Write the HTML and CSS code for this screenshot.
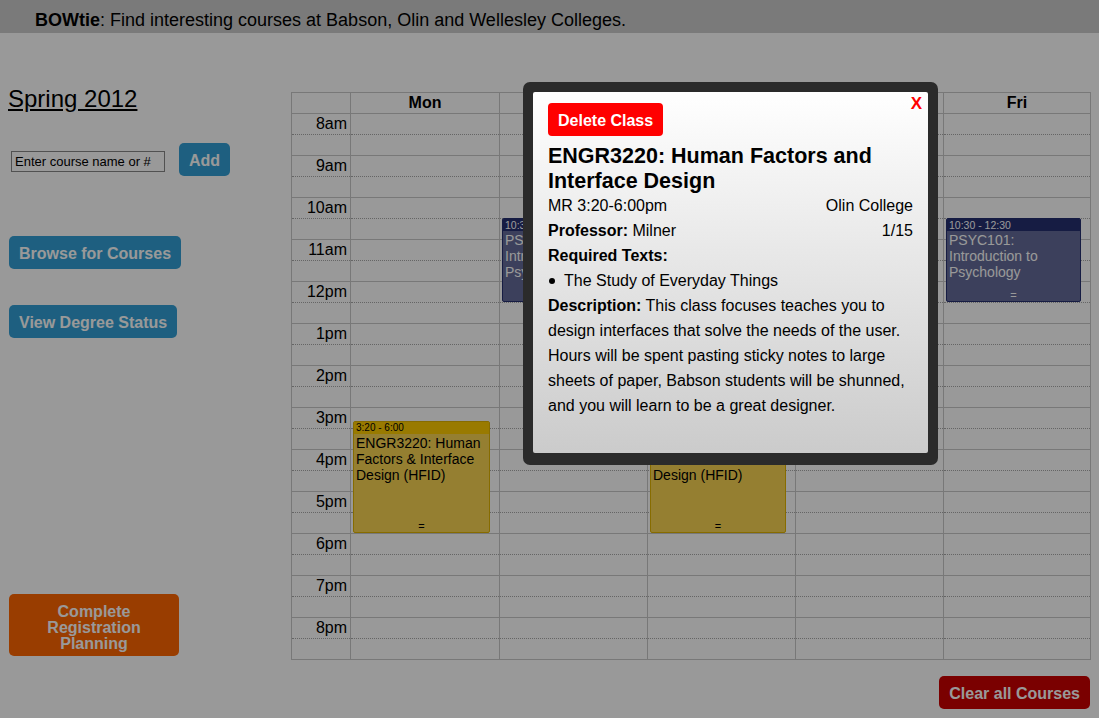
FILE: index.html
```html
<!DOCTYPE html>
<html>
<head>
<meta charset="utf-8">
<title>BOWtie</title>
<link rel="stylesheet" href="styles.css">
</head>
<body>
<div class="topbar"><b>BOWtie</b>: Find interesting courses at Babson, Olin and Wellesley Colleges.</div>
<div class="main">
  <div class="sidebar">
    <a class="term" href="#">Spring 2012</a>
    <div class="addrow">
      <input class="course-input" type="text" value="Enter course name or #">
      <button class="btn btn-add">Add</button>
    </div>
    <button class="btn btn-browse">Browse for Courses</button>
    <button class="btn btn-degree">View Degree Status</button>
    <button class="btn btn-complete">Complete<br>Registration<br>Planning</button>
  </div>
  <div class="calendar-area">
    <div class="cal">
      <div class="col col-time">
        <div class="head"></div>
        <div class="hr"><div class="half">8am</div></div>
        <div class="hr"><div class="half">9am</div></div>
        <div class="hr"><div class="half">10am</div></div>
        <div class="hr"><div class="half">11am</div></div>
        <div class="hr"><div class="half">12pm</div></div>
        <div class="hr"><div class="half">1pm</div></div>
        <div class="hr"><div class="half">2pm</div></div>
        <div class="hr"><div class="half">3pm</div></div>
        <div class="hr"><div class="half">4pm</div></div>
        <div class="hr"><div class="half">5pm</div></div>
        <div class="hr"><div class="half">6pm</div></div>
        <div class="hr"><div class="half">7pm</div></div>
        <div class="hr"><div class="half">8pm</div></div>
      </div>
      <div class="col col-mon">
        <div class="head">Mon</div>
        <div class="hr"><div class="half"></div></div><div class="hr"><div class="half"></div></div><div class="hr"><div class="half"></div></div><div class="hr"><div class="half"></div></div><div class="hr"><div class="half"></div></div><div class="hr"><div class="half"></div></div><div class="hr"><div class="half"></div></div><div class="hr"><div class="half"></div></div><div class="hr"><div class="half"></div></div><div class="hr"><div class="half"></div></div><div class="hr"><div class="half"></div></div><div class="hr"><div class="half"></div></div><div class="hr"><div class="half"></div></div>
        <div class="event yellow" style="top:328px;height:112px">
          <div class="event-time">3:20 - 6:00</div>
          <div class="event-body">ENGR3220: Human Factors &amp; Interface Design (HFID)</div>
          <div class="grip">=</div>
        </div>
      </div>
      <div class="col col-mid">
        <div class="head">Tue</div>
        <div class="hr"><div class="half"></div></div><div class="hr"><div class="half"></div></div><div class="hr"><div class="half"></div></div><div class="hr"><div class="half"></div></div><div class="hr"><div class="half"></div></div><div class="hr"><div class="half"></div></div><div class="hr"><div class="half"></div></div><div class="hr"><div class="half"></div></div><div class="hr"><div class="half"></div></div><div class="hr"><div class="half"></div></div><div class="hr"><div class="half"></div></div><div class="hr"><div class="half"></div></div><div class="hr"><div class="half"></div></div>
        <div class="event blue" style="top:125px;height:84px">
          <div class="event-time">10:30 - 12:30</div>
          <div class="event-body">PSYC101: Introduction to Psychology</div>
          <div class="grip">=</div>
        </div>
      </div>
      <div class="col col-mid">
        <div class="head">Wed</div>
        <div class="hr"><div class="half"></div></div><div class="hr"><div class="half"></div></div><div class="hr"><div class="half"></div></div><div class="hr"><div class="half"></div></div><div class="hr"><div class="half"></div></div><div class="hr"><div class="half"></div></div><div class="hr"><div class="half"></div></div><div class="hr"><div class="half"></div></div><div class="hr"><div class="half"></div></div><div class="hr"><div class="half"></div></div><div class="hr"><div class="half"></div></div><div class="hr"><div class="half"></div></div><div class="hr"><div class="half"></div></div>
        <div class="event yellow" style="top:328px;height:112px">
          <div class="event-time">3:20 - 6:00</div>
          <div class="event-body">ENGR3220: Human Factors &amp; Interface Design (HFID)</div>
          <div class="grip">=</div>
        </div>
      </div>
      <div class="col col-mid">
        <div class="head">Thu</div>
        <div class="hr"><div class="half"></div></div><div class="hr"><div class="half"></div></div><div class="hr"><div class="half"></div></div><div class="hr"><div class="half"></div></div><div class="hr"><div class="half"></div></div><div class="hr"><div class="half"></div></div><div class="hr"><div class="half"></div></div><div class="hr"><div class="half"></div></div><div class="hr"><div class="half"></div></div><div class="hr"><div class="half"></div></div><div class="hr"><div class="half"></div></div><div class="hr"><div class="half"></div></div><div class="hr"><div class="half"></div></div>
      </div>
      <div class="col col-fri">
        <div class="head">Fri</div>
        <div class="hr"><div class="half"></div></div><div class="hr"><div class="half"></div></div><div class="hr"><div class="half"></div></div><div class="hr"><div class="half"></div></div><div class="hr"><div class="half"></div></div><div class="hr"><div class="half"></div></div><div class="hr"><div class="half"></div></div><div class="hr"><div class="half"></div></div><div class="hr"><div class="half"></div></div><div class="hr"><div class="half"></div></div><div class="hr"><div class="half"></div></div><div class="hr"><div class="half"></div></div><div class="hr"><div class="half"></div></div>
        <div class="event blue" style="top:125px;height:84px">
          <div class="event-time">10:30 - 12:30</div>
          <div class="event-body">PSYC101: Introduction to Psychology</div>
          <div class="grip">=</div>
        </div>
      </div>
    </div>
    <button class="btn btn-clear">Clear all Courses</button>
  </div>
</div>

<div class="overlay"></div>
<div class="modal">
  <div class="modal-inner">
    <span class="close">X</span>
    <button class="delete">Delete Class</button>
    <h1 class="title">ENGR3220: Human Factors and Interface Design</h1>
    <div class="row"><span>MR 3:20-6:00pm</span><span>Olin College</span></div>
    <div class="row"><span><b>Professor:</b> Milner</span><span>1/15</span></div>
    <div class="label">Required Texts:</div>
    <ul class="texts"><li>The Study of Everyday Things</li></ul>
    <p class="desc"><b>Description:</b> This class focuses teaches you to design interfaces that solve the needs of the user. Hours will be spent pasting sticky notes to large sheets of paper, Babson students will be shunned, and you will learn to be a great designer.</p>
  </div>
</div>
</body>
</html>
```

FILE: styles.css
```css
html, body {
  margin: 0;
  padding: 0;
}
body {
  font-family: "Liberation Sans", Arial, sans-serif;
  background: #fff;
  color: #000;
  width: 1099px;
  height: 718px;
  overflow: hidden;
}

.topbar {
  height: 33px;
  box-sizing: border-box;
  background: #ccc;
  padding: 11px 0 0 35px;
  font-size: 18px;
  line-height: 19px;
}

.main {
  display: flex;
}

.sidebar {
  width: 291px;
  flex: none;
  display: flex;
  flex-direction: column;
  align-items: flex-start;
}

.term {
  margin: 52px 0 0 8px;
  font-size: 24px;
  line-height: 28px;
  color: #000;
  text-decoration: underline;
}

.addrow {
  display: flex;
  align-items: flex-start;
  margin: 30px 0 0 11px;
}

.course-input {
  margin: 8px 0 0 0;
  width: 154px;
  height: 21px;
  box-sizing: border-box;
  border: 1px solid #888;
  padding: 0 3px;
  font-family: "Liberation Sans", Arial, sans-serif;
  font-size: 13px;
  color: #000;
  background: #fff;
  outline: none;
}

.btn {
  display: block;
  height: 33px;
  box-sizing: border-box;
  border: 0;
  border-radius: 5px;
  color: #fff;
  font-family: "Liberation Sans", Arial, sans-serif;
  font-weight: bold;
  font-size: 16px;
  line-height: 31px;
  padding: 2px 10px 0;
  margin: 0;
  background: #339fd5;
  white-space: nowrap;
  cursor: pointer;
}

.btn-add {
  margin-left: 14px;
}

.btn-browse {
  margin: 60px 0 0 9px;
}

.btn-degree {
  margin: 36px 0 0 9px;
}

.btn-complete {
  margin: 256px 0 0 9px;
  width: 170px;
  height: 62px;
  font-size: 16px;
  line-height: 16px;
  padding: 10px 10px 4px;
  background: #ff6600;
  text-align: center;
}

.calendar-area {
  margin-top: 59px;
  width: 800px;
  display: flex;
  flex-direction: column;
  align-items: flex-end;
}

.cal {
  display: flex;
  width: 800px;
  box-sizing: border-box;
  border-left: 1px solid #c8c8c8;
  border-top: 1px solid #c8c8c8;
}

.col {
  position: relative;
  box-sizing: border-box;
  border-right: 1px solid #c8c8c8;
  flex: none;
}
.col-time { width: 59px; }
.col-mon { width: 149px; }
.col-mid { width: 148px; }
.col-fri { width: 147px; }

.head {
  height: 21px;
  box-sizing: border-box;
  border-bottom: 1px solid #c8c8c8;
  text-align: center;
  font-weight: bold;
  font-size: 16px;
  line-height: 20px;
}

.hr {
  height: 42px;
  box-sizing: border-box;
  border-bottom: 1px solid #c8c8c8;
}

.half {
  height: 21px;
  box-sizing: border-box;
  border-bottom: 1px dotted #a8a8a8;
}

.col-time .half {
  text-align: right;
  padding: 1px 3px 0 0;
  font-size: 16px;
  line-height: 18px;
}

.event {
  position: absolute;
  left: 2px;
  right: 9px;
  box-sizing: border-box;
  border: 1px solid;
  border-radius: 2px;
  overflow: hidden;
  font-size: 14px;
  line-height: 16px;
}

.event-time {
  height: 12px;
  font-size: 10px;
  line-height: 12px;
  padding-left: 2px;
}

.event-body {
  padding: 1px 2px 0 2px;
}

.grip {
  position: absolute;
  left: 0;
  right: 0;
  bottom: 0;
  text-align: center;
  font-size: 11px;
  line-height: 12px;
}

.yellow {
  background: #f8d452;
  border-color: #e2b400;
  color: #000;
}
.yellow .event-time {
  background: #ffcc00;
}

.blue {
  background: #646c99;
  border-color: #252f71;
  color: #fff;
}
.blue .event-time {
  background: #252f71;
  font-size: 10.5px;
}

.btn-clear {
  margin: 16px 1px 0 0;
  background: #cc0000;
}

.overlay {
  position: fixed;
  left: 0;
  top: 0;
  right: 0;
  bottom: 0;
  background: rgba(0, 0, 0, 0.4);
}

.modal {
  position: absolute;
  left: 523px;
  top: 82px;
  width: 415px;
  box-sizing: border-box;
  padding: 10px 10px 12px;
  background: #2b2b2b;
  border-radius: 7px;
}

.modal-inner {
  position: relative;
  background: linear-gradient(#ffffff, #cbcbcb);
  padding: 11px 15px 35px;
  font-size: 16px;
  line-height: 25px;
  border-radius: 2px;
}

.close {
  position: absolute;
  top: 3px;
  right: 6px;
  color: #ff0000;
  font-weight: bold;
  font-size: 17px;
  line-height: 18px;
}

.delete {
  display: block;
  height: 33px;
  box-sizing: border-box;
  border: 0;
  border-radius: 4px;
  background: #ff0000;
  color: #fff;
  font-family: "Liberation Sans", Arial, sans-serif;
  font-weight: bold;
  font-size: 16px;
  line-height: 31px;
  padding: 2px 10px 0;
  margin: 0;
}

.title {
  margin: 8px 0 -1px;
  font-size: 21.5px;
  line-height: 25px;
  font-weight: bold;
}

.row {
  display: flex;
  justify-content: space-between;
}

.label {
  font-weight: bold;
}

.texts {
  margin: 0;
  padding: 0;
  list-style: none;
}
.texts li::before {
  content: "";
  display: inline-block;
  width: 6px;
  height: 6px;
  border-radius: 50%;
  background: #000;
  margin: 0 9px 2px 1px;
  vertical-align: middle;
}

.desc {
  margin: 0;
}
```
